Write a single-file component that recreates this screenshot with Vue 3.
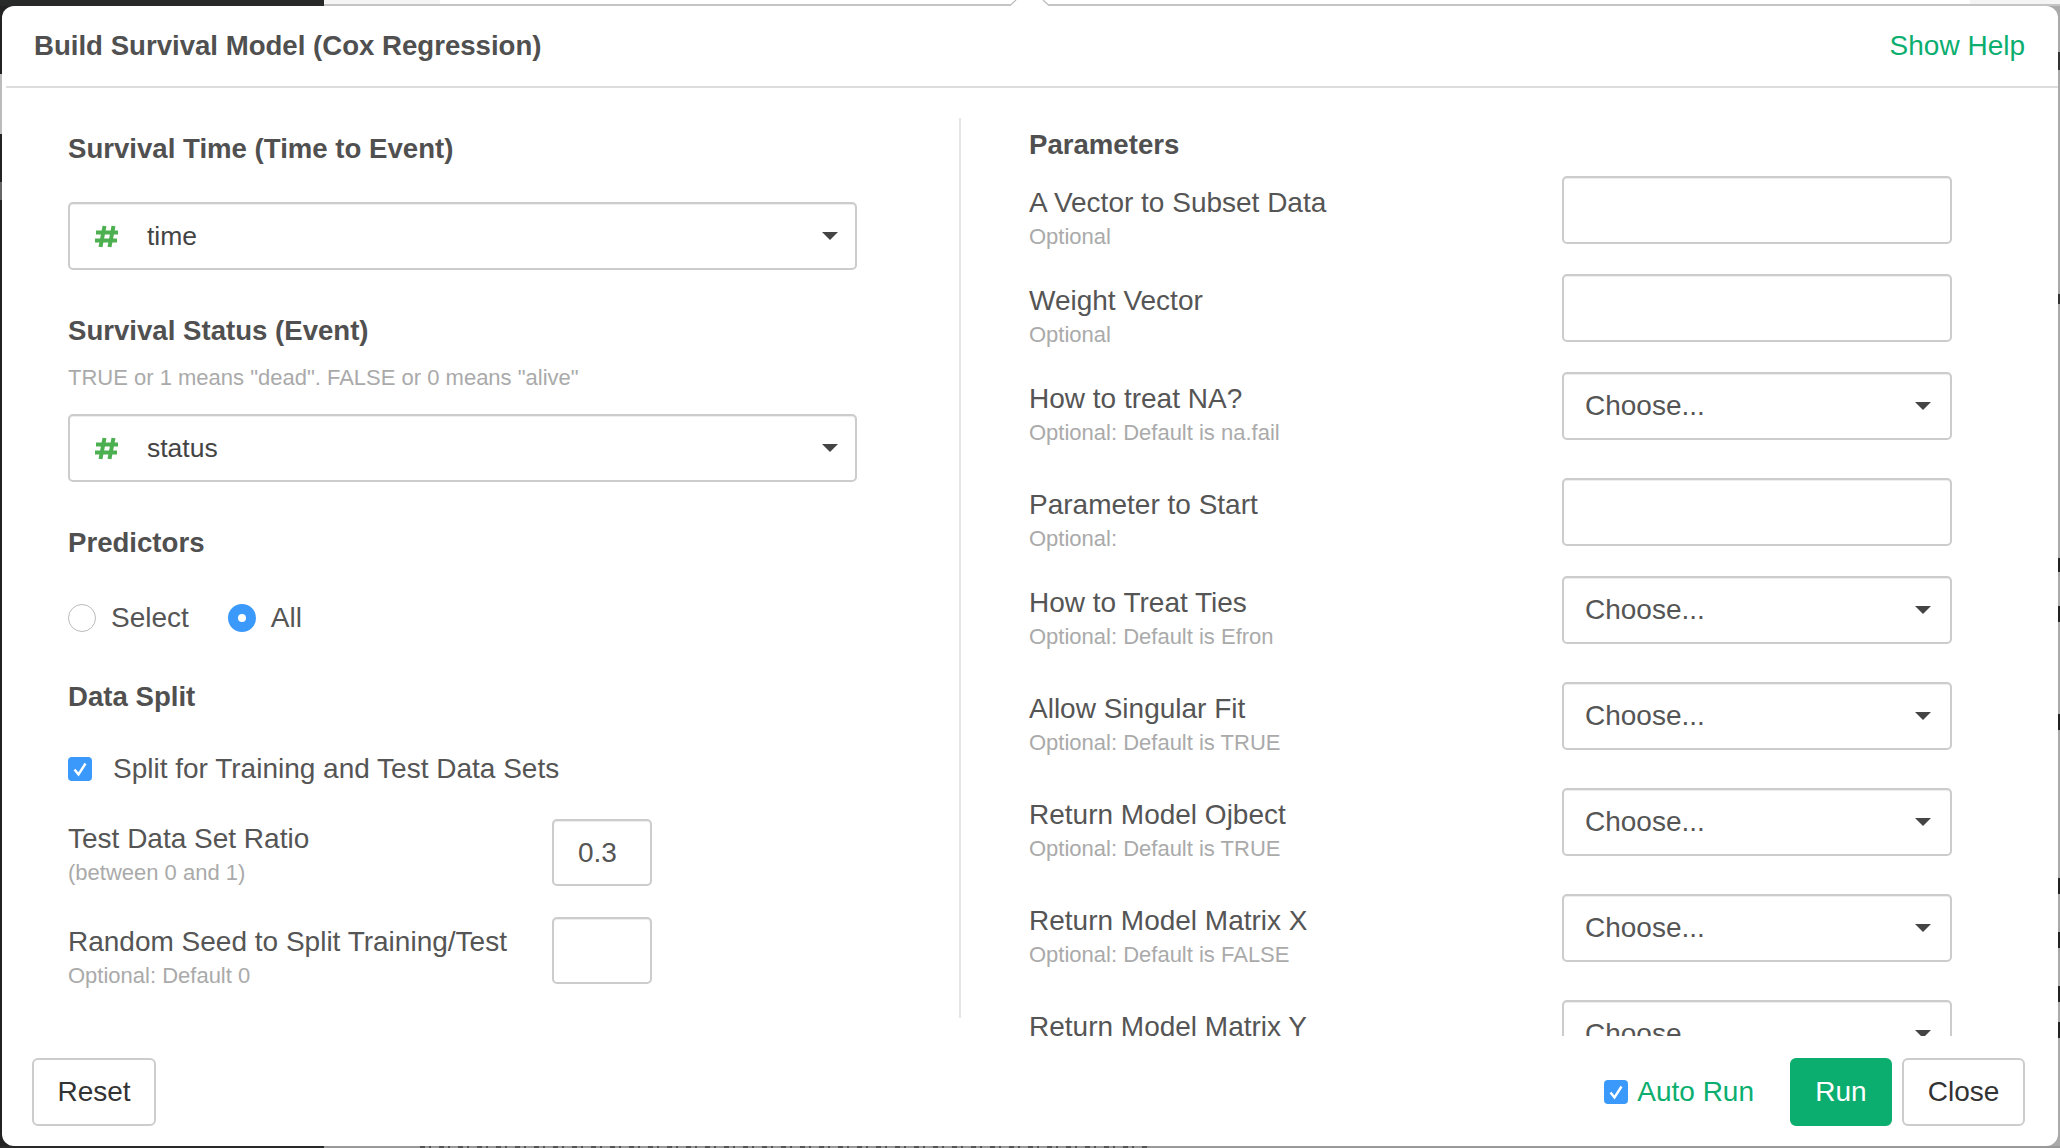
<script setup>
const params = [
  { label: 'A Vector to Subset Data', hint: 'Optional', type: 'text' },
  { label: 'Weight Vector', hint: 'Optional', type: 'text' },
  { label: 'How to treat NA?', hint: 'Optional: Default is na.fail', type: 'choice' },
  { label: 'Parameter to Start', hint: 'Optional:', type: 'text' },
  { label: 'How to Treat Ties', hint: 'Optional: Default is Efron', type: 'choice' },
  { label: 'Allow Singular Fit', hint: 'Optional: Default is TRUE', type: 'choice' },
  { label: 'Return Model Ojbect', hint: 'Optional: Default is TRUE', type: 'choice' },
  { label: 'Return Model Matrix X', hint: 'Optional: Default is FALSE', type: 'choice' },
  { label: 'Return Model Matrix Y', hint: 'Optional: Default is FALSE', type: 'choice' },
]
</script>

<template>
  <div class="page">
    <!-- what shows of the app behind the modal -->
    <div class="top-strip">
      <div class="strip-dark"></div>
      <div class="strip-tab"></div>
      <div class="strip-line">
        <svg class="notch" width="42" height="6" viewBox="0 0 42 6">
          <path d="M0 6L7 0H34L41 6Z" fill="#fff" />
          <path d="M0.5 6L7 0M34 0L40.5 6" stroke="#bbb" stroke-width="1.2" fill="none" />
        </svg>
      </div>
      <div class="strip-tab end"></div>
    </div>

    <div class="middle">
      <div class="side side-left"></div>
      <div class="modal">
        <header class="modal-header">
          <h1 class="modal-title">Build Survival Model (Cox Regression)</h1>
          <a class="help-link">Show Help</a>
        </header>

        <div class="modal-body">
          <section class="col-left">
            <h2 class="section-title first">Survival Time (Time to Event)</h2>
            <div class="select column-select">
              <svg class="hash" width="25" height="23" viewBox="0 0 25 23">
                <path d="M10.5 1L6.5 22M19.5 1L15.5 22M2 7.5H24M1 15.5H23" stroke="#4caf50" stroke-width="4" fill="none" />
              </svg>
              <span class="select-value column-value">time</span><i class="caret"></i>
            </div>

            <h2 class="section-title status">Survival Status (Event)</h2>
            <p class="section-hint">TRUE or 1 means "dead". FALSE or 0 means "alive"</p>
            <div class="select column-select">
              <svg class="hash" width="25" height="23" viewBox="0 0 25 23">
                <path d="M10.5 1L6.5 22M19.5 1L15.5 22M2 7.5H24M1 15.5H23" stroke="#4caf50" stroke-width="4" fill="none" />
              </svg>
              <span class="select-value column-value">status</span><i class="caret"></i>
            </div>

            <h2 class="section-title predictors">Predictors</h2>
            <div class="radio-row">
              <span class="radio"></span><span class="radio-label">Select</span>
              <span class="radio on"></span><span class="radio-label">All</span>
            </div>

            <h2 class="section-title split">Data Split</h2>
            <div class="check-row">
              <span class="check">
                <svg viewBox="0 0 24 24" width="24" height="24"><path d="M6.5 12.5l4 5 7-11" fill="none" stroke="#fff" stroke-width="2.4" /></svg>
              </span>
              <span>Split for Training and Test Data Sets</span>
            </div>

            <div class="split-row">
              <div class="split-label">
                <div class="label">Test Data Set Ratio</div>
                <div class="hint">(between 0 and 1)</div>
              </div>
              <div class="input small">0.3</div>
            </div>
            <div class="split-row second">
              <div class="split-label">
                <div class="label">Random Seed to Split Training/Test</div>
                <div class="hint">Optional: Default 0</div>
              </div>
              <div class="input small"></div>
            </div>
          </section>

          <section class="col-right">
            <h2 class="section-title params">Parameters</h2>
            <div v-for="p in params" :key="p.label" class="param-row" :class="'row-' + p.type">
              <div class="param-text">
                <div class="label">{{ p.label }}</div>
                <div class="hint">{{ p.hint }}</div>
              </div>
              <div v-if="p.type === 'text'" class="input param-control"></div>
              <div v-else class="select param-control">
                <span class="select-value">Choose...</span><i class="caret"></i>
              </div>
            </div>
          </section>
        </div>

        <footer class="modal-footer">
          <button class="btn btn-reset">Reset</button>
          <div class="footer-right">
            <span class="check">
              <svg viewBox="0 0 24 24" width="24" height="24"><path d="M6.5 12.5l4 5 7-11" fill="none" stroke="#fff" stroke-width="2.4" /></svg>
            </span>
            <span class="auto-run">Auto Run</span>
            <button class="btn btn-run">Run</button>
            <button class="btn btn-close">Close</button>
          </div>
        </footer>
      </div>
      <div class="side side-right"></div>
    </div>

    <div class="bottom-strip">
      <div class="strip-dark"></div>
      <div class="strip-rest"></div>
    </div>
  </div>
</template>

<style>
html, body { margin: 0; padding: 0; }
</style>

<style scoped>
.page {
  width: 2060px;
  height: 1148px;
  overflow: hidden;
  display: flex;
  flex-direction: column;
  background: linear-gradient(to right, #222 1030px, #aaa 1030px);
  font-family: "Liberation Sans", Arial, sans-serif;
  color: #555;
}

.top-strip {
  height: 6px;
  flex-shrink: 0;
  display: flex;
}

.strip-dark {
  width: 324px;
  background: #282a2a;
}

.strip-tab {
  width: 116px;
  box-sizing: border-box;
  background: #f4f4f4;
  border-bottom: 2px solid #c4c4c4;
}

.strip-tab.end { width: 90px; }

.strip-line {
  flex: 1;
  position: relative;
  box-sizing: border-box;
  background: #fff;
  border-bottom: 2px solid #c4c4c4;
}

.notch {
  position: absolute;
  left: 569px;
  top: 0;
}

.bottom-strip {
  height: 2px;
  flex-shrink: 0;
  display: flex;
}

.strip-rest {
  flex: 1;
  background:
    repeating-linear-gradient(to right, #555 0 5px, transparent 5px 9px, #555 9px 11px, transparent 11px 19px) 96px 0 / 730px 100% no-repeat,
    #999;
}

.middle {
  flex: 1;
  min-height: 0;
  display: flex;
}

.side {
  width: 2px;
  flex-shrink: 0;
}

.side-left {
  background: linear-gradient(to bottom, #222 68px, #bbb 68px, #bbb 128px, #222 128px, #222 176px, #666 176px, #666 194px, #222 194px);
}

.side-right {
  background: linear-gradient(to bottom,
    #aaa 46px, #333 46px, #333 64px, #aaa 64px,
    #aaa 288px, #333 288px, #333 298px, #aaa 298px,
    #aaa 552px, #222 552px, #222 566px, #aaa 566px,
    #aaa 600px, #222 600px, #222 616px, #aaa 616px,
    #aaa 708px, #222 708px, #222 724px, #aaa 724px,
    #aaa 872px, #222 872px, #222 888px, #aaa 888px,
    #aaa 926px, #222 926px, #222 942px, #aaa 942px,
    #aaa 980px, #222 980px, #222 996px, #aaa 996px,
    #aaa 1016px, #222 1016px, #222 1032px, #aaa 1032px);
}

.modal {
  flex: 1;
  min-width: 0;
  background: #fff;
  border-radius: 12px;
  display: flex;
  flex-direction: column;
  overflow: hidden;
}

.modal-header {
  height: 82px;
  flex-shrink: 0;
  box-sizing: border-box;
  margin-left: 4px;
  padding: 0 33px 1px 28px;
  border-bottom: 2px solid #ddd;
  display: flex;
  align-items: center;
  justify-content: space-between;
}

.modal-title {
  margin: 0;
  font-size: 27.6px;
  font-weight: 700;
  color: #505050;
}

.help-link {
  font-size: 28px;
  color: #0bae6f;
}

.modal-body {
  flex: 1;
  min-height: 0;
  overflow: hidden;
  display: flex;
}

.col-left {
  width: 957px;
  box-sizing: border-box;
  padding: 45px 0 0 66px;
  flex-shrink: 0;
}

.col-right {
  flex: 1;
  align-self: flex-start;
  margin-top: 30px;
  height: 900px;
  padding-left: 68px;
  border-left: 2px solid #e6e6e6;
}

.section-title {
  margin: 0;
  font-size: 27.6px;
  line-height: 32px;
  font-weight: 700;
  color: #505050;
}

.section-title.first { margin-bottom: 37px; }
.section-title.status { margin-top: 45px; }
.section-title.predictors { margin-top: 45px; }
.section-title.split { margin-top: 47px; }
.section-title.params { margin-top: 11px; margin-bottom: 15px; }

.section-hint {
  margin: 18px 0 23px;
  font-size: 22px;
  line-height: 26px;
  color: #aaa;
}

.select,
.input {
  box-sizing: border-box;
  background: #fff;
  border: 2px solid #ccc;
  border-radius: 5px;
  box-shadow: inset 0 1px 1px rgba(0, 0, 0, 0.075);
  height: 68px;
  font-size: 28px;
  color: #555;
  display: flex;
  align-items: center;
}

.column-select {
  width: 789px;
  padding: 0 17px 0 24px;
}

.hash {
  flex-shrink: 0;
  margin-right: 28px;
}

.select-value { flex: 1; }

.column-value { font-size: 26.5px; color: #444; }

.caret {
  width: 0;
  height: 0;
  border-left: 8px solid transparent;
  border-right: 8px solid transparent;
  border-top: 8px solid #444;
}

.radio-row {
  margin-top: 43px;
  display: flex;
  align-items: center;
  font-size: 28px;
}

.radio {
  box-sizing: border-box;
  width: 28px;
  height: 28px;
  border-radius: 50%;
  border: 1.5px solid #bbb;
  background: #fff;
}

.radio.on { border: 10px solid #3b99fc; }

.radio-label { margin-left: 15px; margin-right: 39px; }

.check-row {
  margin-top: 40px;
  display: flex;
  align-items: center;
  gap: 21px;
  font-size: 28px;
}

.check {
  width: 24px;
  height: 24px;
  border-radius: 4px;
  background: #3b99fc;
  display: block;
  flex-shrink: 0;
}

.check svg { display: block; }

.split-row {
  margin-top: 34px;
  display: flex;
  height: 67px;
}

.split-row.second { margin-top: 31px; }

.split-label {
  width: 484px;
  padding-top: 4px;
}

.split-row.second .split-label { padding-top: 9px; }

.label {
  font-size: 28px;
  line-height: 32px;
  color: #555;
  white-space: nowrap;
}

.hint {
  margin-top: 5px;
  font-size: 22px;
  line-height: 26px;
  color: #aaa;
  white-space: nowrap;
}

.input.small {
  width: 100px;
  height: 67px;
  padding-left: 24px;
}

.param-row {
  width: 923px;
  display: flex;
  justify-content: space-between;
  height: 98px;
}

.param-row.row-choice { height: 106px; }

.param-text { padding-top: 11px; }

.param-control {
  width: 390px;
  padding: 0 19px 0 21px;
}

.modal-footer {
  height: 110px;
  flex-shrink: 0;
  box-sizing: border-box;
  padding: 22px 33px 20px 30px;
  display: flex;
  justify-content: space-between;
}

.footer-right {
  display: flex;
  align-items: center;
}

.btn {
  box-sizing: border-box;
  height: 68px;
  padding: 0;
  font: 28px "Liberation Sans", Arial, sans-serif;
  color: #333;
  background: #fff;
  border: 2px solid #ccc;
  border-radius: 6px;
}

.btn-reset { width: 124px; }

.auto-run {
  margin-left: 9px;
  margin-right: 36px;
  font-size: 28px;
  color: #0bae6f;
}

.btn-run {
  width: 102px;
  background: #0bae6f;
  border-color: #0bae6f;
  color: #fff;
  margin-right: 10px;
}

.btn-close { width: 123px; }
</style>
